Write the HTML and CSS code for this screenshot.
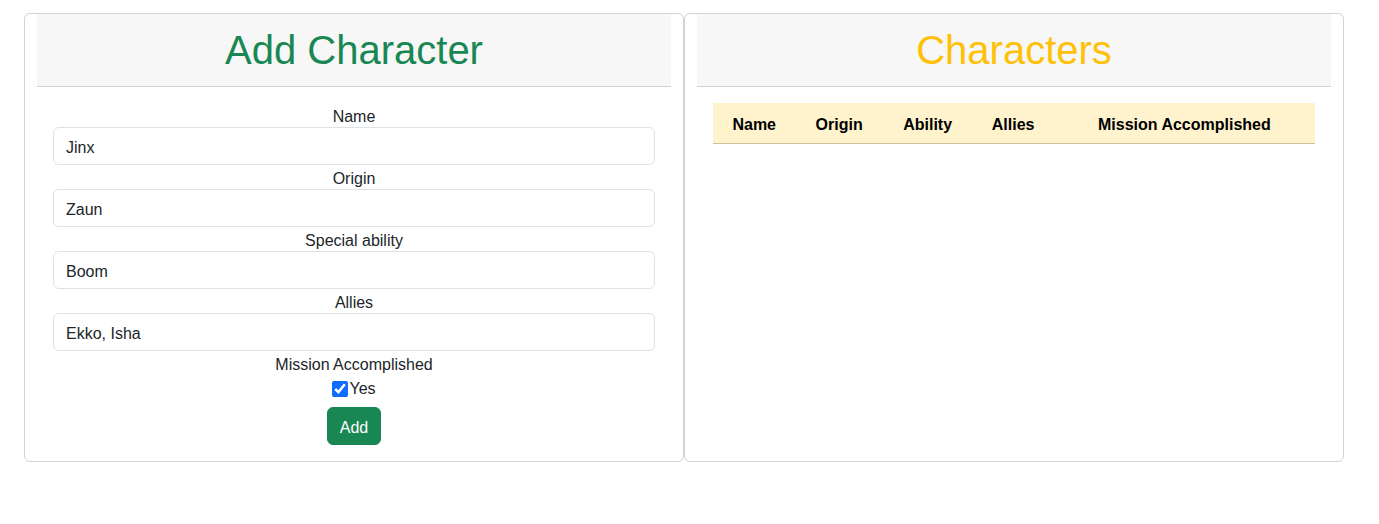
FILE: index.html
```html
<!DOCTYPE html>
<html lang="en">
<head>
<meta charset="utf-8">
<title>Characters</title>
<link rel="stylesheet" href="styles.css">
</head>
<body>
<main class="layout">
  <section class="card">
    <header class="card-header">
      <h1 class="title title-add">Add Character</h1>
    </header>
    <form class="card-body form">
      <label class="field-label" for="name">Name</label>
      <input class="field-input" id="name" type="text" value="Jinx">
      <label class="field-label" for="origin">Origin</label>
      <input class="field-input" id="origin" type="text" value="Zaun">
      <label class="field-label" for="ability">Special ability</label>
      <input class="field-input" id="ability" type="text" value="Boom">
      <label class="field-label" for="allies">Allies</label>
      <input class="field-input" id="allies" type="text" value="Ekko, Isha">
      <div class="field-label">Mission Accomplished</div>
      <label class="check-row"><input class="check" type="checkbox" checked>Yes</label>
      <button class="btn-add" type="button">Add</button>
    </form>
  </section>
  <section class="card">
    <header class="card-header">
      <h1 class="title title-list">Characters</h1>
    </header>
    <div class="card-body">
      <table class="table">
        <thead>
          <tr>
            <th>Name</th>
            <th>Origin</th>
            <th>Ability</th>
            <th>Allies</th>
            <th>Mission Accomplished</th>
          </tr>
        </thead>
        <tbody></tbody>
      </table>
    </div>
  </section>
</main>
</body>
</html>
```

FILE: styles.css
```css
* { box-sizing: border-box; }

body {
  margin: 0;
  font-family: "Liberation Sans", Arial, sans-serif;
  font-size: 16px;
  line-height: 1.5;
  color: #212529;
  background: #fff;
}

.layout {
  display: flex;
  align-items: stretch;
  padding: 13px 24px;
}

.card {
  width: 660px;
  border: 1px solid #d3d3d3;
  border-radius: 6px;
  padding: 0 12px;
  display: flex;
  flex-direction: column;
}

.card-header {
  background: #f7f7f7;
  border-bottom: 1px solid #d0d0d0;
  padding: 12px 16px;
  text-align: center;
}

.title {
  margin: 0;
  font-size: 40px;
  font-weight: 400;
  line-height: 1.2;
}

.title-add { color: #198754; }
.title-list { color: #ffc107; }

.card-body {
  padding: 16px;
}

.form {
  display: flex;
  flex-direction: column;
  align-items: stretch;
  text-align: center;
}

.field-label {
  display: block;
  padding-top: 4px;
  line-height: 20px;
}

.field-input {
  display: block;
  width: 100%;
  height: 38px;
  padding: 8px 12px 4px;
  font: inherit;
  color: #212529;
  border: 1px solid #dee2e6;
  border-radius: 6px;
  background: #fff;
}

.check-row {
  display: flex;
  justify-content: center;
  align-items: center;
  height: 24px;
  padding-top: 3px;
}

.check {
  width: 16px;
  height: 16px;
  margin: 0 1px 0 0;
  accent-color: #0d6efd;
}

.btn-add {
  align-self: center;
  margin-top: 8px;
  padding: 8px 12px 4px;
  font: inherit;
  line-height: 24px;
  color: #fff;
  background: #198754;
  border: 1px solid #198754;
  border-radius: 6px;
}

.table {
  width: 100%;
  border-collapse: collapse;
}

.table th {
  background: #fff3cd;
  color: #000;
  font-weight: 700;
  padding: 10px 8px 6px;
  line-height: 24px;
  text-align: center;
  border-bottom: 1px solid #ccc2a4;
}
```
